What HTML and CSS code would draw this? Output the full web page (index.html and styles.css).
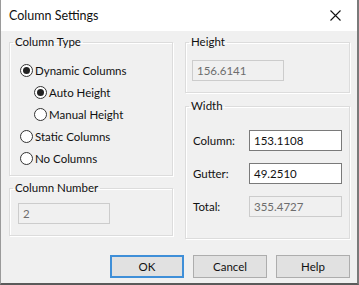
FILE: index.html
```html
<!DOCTYPE html>
<html lang="en">
<head>
  <meta charset="UTF-8" />
  <title>Column Settings</title>
  <link rel="stylesheet" href="styles.css">
</head>
<body>
  <div class="window">
    <div class="titlebar">
      <span class="title">Column Settings</span>
      <span class="close">
        <svg width="11" height="11" viewBox="0 0 11 11"><path d="M0.5 0.5 L10.5 10.5 M10.5 0.5 L0.5 10.5" stroke="#111" stroke-width="1.1" fill="none"/></svg>
      </span>
    </div>

    <div class="client">
      <div class="columns">
        <div class="col col-left">
          <fieldset class="group group-type">
            <legend>Column Type</legend>
            <div class="radio checked"><span class="dot"></span>Dynamic Columns</div>
            <div class="radio checked sub"><span class="dot"></span>Auto Height</div>
            <div class="radio sub"><span class="dot"></span>Manual Height</div>
            <div class="radio"><span class="dot"></span>Static Columns</div>
            <div class="radio"><span class="dot"></span>No Columns</div>
          </fieldset>

          <fieldset class="group group-number">
            <legend>Column Number</legend>
            <div class="field disabled">2</div>
          </fieldset>
        </div>

        <div class="col col-right">
          <fieldset class="group group-height">
            <legend>Height</legend>
            <div class="field disabled">156.6141</div>
          </fieldset>

          <fieldset class="group group-width">
            <legend>Width</legend>
            <div class="row">
              <span class="label">Column:</span>
              <div class="field">153.1108</div>
            </div>
            <div class="row">
              <span class="label">Gutter:</span>
              <div class="field">49.2510</div>
            </div>
            <div class="row">
              <span class="label">Total:</span>
              <div class="field disabled">355.4727</div>
            </div>
          </fieldset>
        </div>
      </div>

      <div class="buttons">
        <button class="btn btn-default">OK</button>
        <button class="btn">Cancel</button>
        <button class="btn">Help</button>
      </div>
    </div>
  </div>
</body>
</html>
```

FILE: styles.css
```css
* { margin: 0; padding: 0; box-sizing: border-box; }

html, body {
  width: 359px;
  height: 285px;
  overflow: hidden;
  background: #f0f0f0;
  font-family: Lato, 'Noto Sans', sans-serif;
  font-size: 11.5px;
  color: #111;
}

.window {
  width: 359px;
  height: 285px;
  display: flex;
  flex-direction: column;
  border-left: 1px solid #9a9a9a;
  border-right: 2px solid #7a7a7a;
  border-bottom: 2px solid #5a5a5a;
}

.titlebar {
  height: 31px;
  background: #fff;
  display: flex;
  align-items: center;
  justify-content: space-between;
  padding-left: 8px;
  padding-right: 16px;
}

.title {
  font-size: 12.5px;
}

.close svg { display: block; }

.client {
  flex-grow: 1;
  background: #f0f0f0;
  padding: 4px 6px 0 8px;
  display: flex;
  flex-direction: column;
}

.columns {
  display: flex;
  gap: 12px;
}

.col {
  display: flex;
  flex-direction: column;
}

.col-left { width: 164px; gap: 5px; }
.col-right { width: 165px; gap: 6px; }

.group {
  border: 1px solid #dcdcdc;
  box-shadow: inset 1px 1px 0 #fff, 1px 1px 0 #fff;
  padding: 0;
}

.group legend {
  margin-left: 3px;
  padding: 0 2px;
  line-height: 14px;
}

.group-type { height: 141px; padding-top: 10px; }
.group-type .radio { margin-left: 10px; }
.group-number { height: 55px; padding-top: 8px; }
.group-number .field { margin-left: 8px; }
.group-height { height: 58px; padding-top: 11px; }
.group-height .field { margin-left: 6px; }
.group-width { height: 140px; padding-top: 17px; }
.group-width .row { margin-left: 7px; }

.radio {
  height: 22px;
  display: flex;
  align-items: center;
  gap: 2px;
}

.group-type .radio.sub { margin-left: 24px; }

.dot {
  width: 13px;
  height: 13px;
  border: 1px solid #333;
  border-radius: 50%;
  background: #fff;
  display: flex;
  align-items: center;
  justify-content: center;
  flex-shrink: 0;
}

.radio.checked .dot::after {
  content: '';
  width: 7px;
  height: 7px;
  border-radius: 50%;
  background: #222;
}

.field {
  width: 92px;
  height: 21px;
  border: 1px solid #7a7a7a;
  background: #fff;
  padding-left: 4px;
  line-height: 19px;
}

.field.disabled {
  border-color: #cccccc;
  background: #f0f0f0;
  color: #6d6d6d;
}

.row {
  display: flex;
  align-items: center;
  height: 21px;
  margin-bottom: 12px;
}

.row .label { width: 56px; }
.row .field { width: 93px; }

.buttons {
  margin-top: auto;
  margin-bottom: 5px;
  display: flex;
  justify-content: flex-end;
  gap: 9px;
  padding-right: 1px;
}

.btn {
  width: 74px;
  height: 23px;
  border: 1px solid #adadad;
  background: #e1e1e1;
  font-family: Lato, 'Noto Sans', sans-serif;
  font-size: 11.5px;
  color: #111;
}

.btn-default {
  border: 2px solid #3f8fd8;
}
```
